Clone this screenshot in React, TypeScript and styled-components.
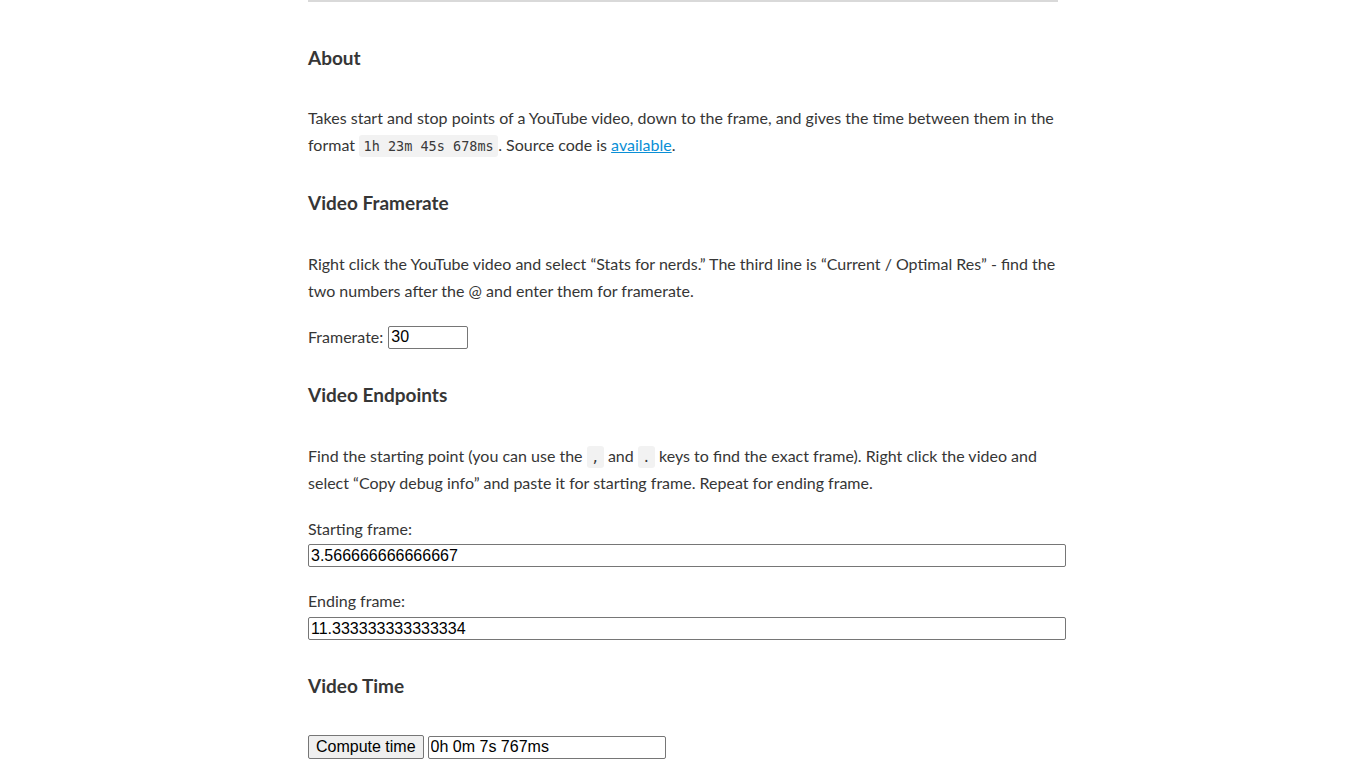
import React from "react";
import styled, { createGlobalStyle } from "styled-components";

const Global = createGlobalStyle`
  html, body { margin: 0; padding: 0; background: #fff; }
  body {
    font-family: Lato, "Open Sans", sans-serif;
    font-size: 16px;
    color: #363636;
  }
`;

const Page = styled.main`
  width: 750px;
  margin: 0 auto;
  display: block;
`;

const Rule = styled.hr`
  margin: 0;
  border: 0;
  border-top: 2px solid #d9d9d9;
  height: 0;
`;

const Heading = styled.h2<{ $top: number }>`
  margin: ${(p) => p.$top}px 0 0 0;
  font-size: 19px;
  line-height: 24px;
  font-weight: 700;
  color: #363636;
`;

const Para = styled.p<{ $top: number }>`
  margin: ${(p) => p.$top}px 0 0 0;
  line-height: 27px;
  font-size: 16px;
`;

const Code = styled.code`
  font-family: "DejaVu Sans Mono", "Liberation Mono", monospace;
  font-size: 13.5px;
  line-height: 1;
  color: #3a3a3a;
  background: #f2f2f2;
  border-radius: 3px;
  padding: 3px 4.5px;
`;

const Link = styled.a`
  color: #0a8fd6;
  text-decoration: underline;
`;

const Row = styled.div<{ $top: number }>`
  margin-top: ${(p) => p.$top}px;
  display: flex;
  align-items: center;
  gap: 4px;
  line-height: 24px;
`;

const FieldLabel = styled.span`
  margin-right: 1px;
`;

const Label = styled.label<{ $top: number; $below?: number }>`
  display: block;
  margin-top: ${(p) => p.$top}px;
  margin-bottom: ${(p) => p.$below ?? 2}px;
  line-height: 27px;
`;

const Field = styled.input<{ $w?: string }>`
  font-family: "Liberation Sans", Arial, sans-serif;
  font-size: 16px;
  color: #000;
  width: ${(p) => p.$w || "calc(100% + 2px)"};
  box-sizing: content-box;
  padding: 1px 2px;
  border: 1px solid #767676;
  border-radius: 2px;
  height: 19px;
  display: block;
  background: #fff;
  outline: none;
`;

const Button = styled.button`
  font-family: "Liberation Sans", Arial, sans-serif;
  font-size: 16px;
  color: #000;
  background: #efefef;
  border: 1px solid #767676;
  border-radius: 2px;
  padding: 1px 7px;
  height: 24px;
  box-sizing: border-box;
`;

export default function App() {
  return (
    <>
      <Global />
      <Page>
        <Rule />
        <Heading $top={44}>About</Heading>
        <Para $top={34}>
          Takes start and stop points of a YouTube video, down to the frame, and gives the time between them in the
          format <Code>1h 23m 45s 678ms</Code>. Source code is <Link href="#">available</Link>.
        </Para>
        <Heading $top={33}>Video Framerate</Heading>
        <Para $top={35}>
          Right click the YouTube video and select “Stats for nerds.” The third line is “Current / Optimal Res” - find the
          two numbers after the @ and enter them for framerate.
        </Para>
        <Row $top={21}>
          <FieldLabel>Framerate:</FieldLabel>
          <Field $w="74px" defaultValue="30" />
        </Row>
        <Heading $top={34}>Video Endpoints</Heading>
        <Para $top={35}>
          Find the starting point (you can use the <Code>,</Code> and <Code>.</Code> keys to find the exact frame). Right click the video and
          select “Copy debug info” and paste it for starting frame. Repeat for ending frame.
        </Para>
        <Label $top={19}>Starting frame:</Label>
        <Field defaultValue="3.566666666666667" />
        <Label $top={20} $below={3}>Ending frame:</Label>
        <Field defaultValue="11.333333333333334" />
        <Heading $top={34}>Video Time</Heading>
        <Row $top={37}>
          <Button>Compute time</Button>
          <Field $w="232px" defaultValue="0h 0m 7s 767ms" />
        </Row>
      </Page>
    </>
  );
}
